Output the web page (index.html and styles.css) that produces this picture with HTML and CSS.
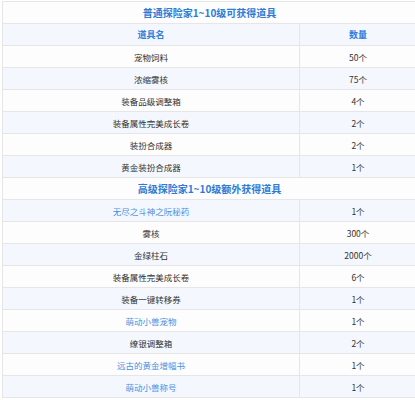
FILE: index.html
```html
<!DOCTYPE html>
<html lang="zh-CN">
<head>
<meta charset="utf-8">
<link rel="stylesheet" href="styles.css">
</head>
<body>
<table class="items">
  <colgroup><col class="col-name"><col class="col-qty"></colgroup>
  <tr class="title"><td colspan="2">普通探险家1~10级可获得道具</td></tr>
  <tr class="head alt"><td>道具名</td><td>数量</td></tr>
  <tr><td>宠物饲料</td><td>50个</td></tr>
  <tr class="alt"><td>浓缩雾核</td><td>75个</td></tr>
  <tr><td>装备品级调整箱</td><td>4个</td></tr>
  <tr class="alt"><td>装备属性完美成长卷</td><td>2个</td></tr>
  <tr><td>装扮合成器</td><td>2个</td></tr>
  <tr class="alt"><td>黄金装扮合成器</td><td>1个</td></tr>
  <tr class="title"><td colspan="2">高级探险家1~10级额外获得道具</td></tr>
  <tr class="alt"><td class="link">无尽之斗神之阮秘药</td><td>1个</td></tr>
  <tr><td>雾核</td><td>300个</td></tr>
  <tr class="alt"><td>金绿柱石</td><td>2000个</td></tr>
  <tr><td>装备属性完美成长卷</td><td>6个</td></tr>
  <tr class="alt"><td>装备一键转移券</td><td>1个</td></tr>
  <tr><td class="link">萌动小兽宠物</td><td>1个</td></tr>
  <tr class="alt"><td>缭银调整箱</td><td>2个</td></tr>
  <tr><td class="link">远古的黄金增幅书</td><td>1个</td></tr>
  <tr class="alt"><td class="link">萌动小兽称号</td><td>1个</td></tr>
</table>
</body>
</html>
```
FILE: styles.css
```css
html, body {
  margin: 0;
  padding: 0;
  background: #ffffff;
}
body {
  padding: 1px 0 0 2px;
  font-family: "Noto Sans CJK SC", "Microsoft YaHei", sans-serif;
}
.items {
  border-collapse: collapse;
  width: 414px;
  table-layout: fixed;
  color: #333333;
  font-size: 8.5px;
}
.col-name {
  width: 297px;
}
.col-qty {
  width: 117px;
}
.items td {
  border: 1px solid #e6e6e6;
  height: 21px;
  padding: 0;
  text-align: center;
  vertical-align: middle;
  line-height: 12px;
  background: #fdfdfd;
}
.items tr.alt td {
  background: #f4f8fe;
}
.items tr.title td {
  color: #2e7bd6;
  font-weight: bold;
  font-size: 10px;
  background: #fdfdfd;
}
.items tr.head td {
  color: #3380dc;
  font-weight: bold;
  font-size: 9px;
}
.items td.link {
  color: #4a8ee0;
}
```
